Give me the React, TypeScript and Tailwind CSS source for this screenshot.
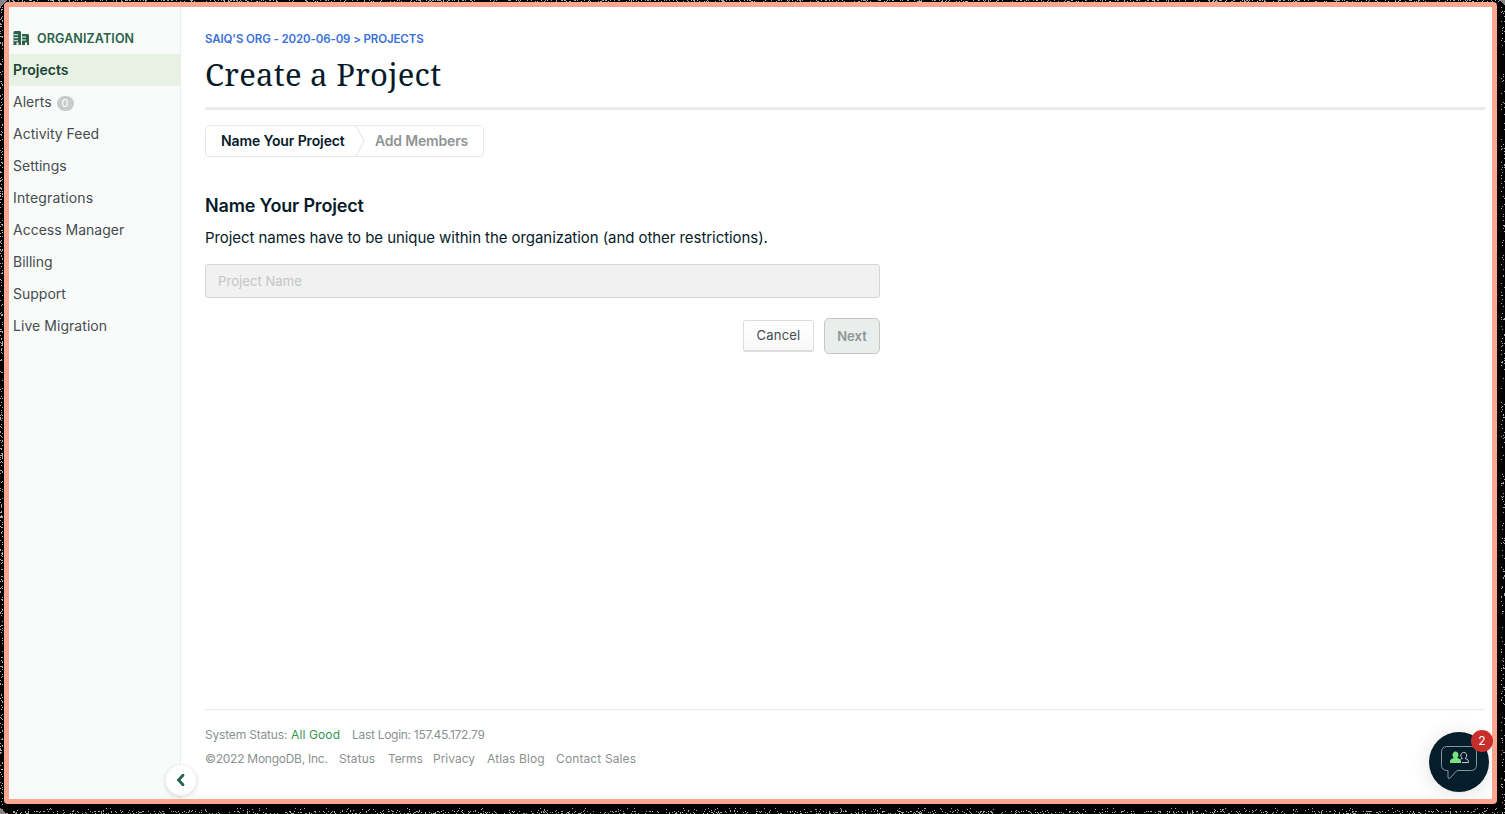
import React from "react";

const nav: [string, string][] = [
  ["Projects", "font-semibold text-[#1c4234]"],
  ["Alerts", ""],
  ["Activity Feed", ""],
  ["Settings", ""],
  ["Integrations", "tracking-[0.150px]"],
  ["Access Manager", ""],
  ["Billing", ""],
  ["Support", ""],
  ["Live Migration", "tracking-[0.050px]"],
];

// Scattered one-pixel specks along the dark rim around the window.
function specks() {
  let seed = 7;
  const rnd = () => {
    seed = (seed * 16807) % 2147483647;
    return seed / 2147483647;
  };
  let d = "";
  const put = (x: number, y: number) => {
    d += `M${Math.floor(x)} ${Math.floor(y)}h1v1h-1z`;
  };
  for (let i = 0; i < 450; i++) put(rnd() * 3, rnd() * 814);
  for (let i = 0; i < 260; i++) put(1501 + rnd() * 4, rnd() * 814);
  for (let i = 0; i < 650; i++) put(rnd() * 1505, rnd() * 1.5);
  for (let i = 0; i < 700; i++) put(rnd() * 1505, 811 + rnd() * 3);
  for (let i = 0; i < 250; i++) put(rnd() * 1505, 808 + rnd() * 4);
  return d;
}

const speckPath = specks();

function OrgIcon() {
  return (
    <svg className="mb-[2px]" width="17" height="16" viewBox="0 0 17 16" fill="#2a6149">
      <path
        fillRule="evenodd"
        d="M1.500 1h5.500l1 1v13H5.500v-2.500h-2V15H.5V2zM0 4.200h5v1H0zM0 7.200h5v1H0zM0 10.200h5v1H0z"
      />
      <path
        fillRule="evenodd"
        d="M9 4h6l1 1v10h-2v-2.500h-2V15H9zM9 6.500h4v1H9zM9 9.500h4v1H9z"
      />
    </svg>
  );
}

function Sidebar() {
  return (
    <aside className="relative w-[172px] shrink-0 border-r border-[#e7eeec] bg-[#f9fbfa] pt-[16px]">
      <div className="flex h-[31px] items-center gap-[7px] pl-[4px] text-[12.500px] font-semibold tracking-[0.120px] text-[#2a6149]">
        <OrgIcon />
        <span className="pt-[1px]">ORGANIZATION</span>
      </div>
      <nav className="text-[14px] text-[#464c4f]">
        {nav.map(([name, style]) => (
          <div
            key={name}
            className={"flex h-8 items-center gap-[5px] pl-[4px] " + style + (name === "Projects" ? " bg-[#e7f1e4]" : "")}
          >
            <span className="pb-[1px]">{name}</span>
            {name === "Alerts" && (
              <span className="mt-[2px] flex h-[15px] w-[17px] items-center justify-center rounded-full bg-[#c8cccb] text-[11px] text-white">0</span>
            )}
          </div>
        ))}
      </nav>
      <button className="absolute right-[-17px] bottom-[3px] flex size-8 items-center justify-center rounded-full border border-[#eef1f0] bg-white shadow-[0_2px_4px_rgba(0,0,0,0.12)]">
        <svg width="10" height="14" viewBox="0 0 10 14" fill="none" stroke="#23644b" strokeWidth="2.800" strokeLinecap="round" strokeLinejoin="miter">
          <path d="M7 2.200 2.500 7l4.500 4.800" />
        </svg>
      </button>
    </aside>
  );
}

function Steps() {
  return (
    <div className="mt-[15px] flex h-8 w-[279px] items-center rounded-[4px] border border-[#e7eaea] text-[14px] font-semibold tracking-[-0.120px]">
      <span className="w-[135px] pb-[1px] pl-[15px] whitespace-nowrap text-[#061b29]">Name Your Project</span>
      <svg width="34" height="30" viewBox="0 0 34 30" fill="none" stroke="#dfe3e2">
        <path d="M15 0 23 15 15 30" />
      </svg>
      <span className="pb-[1px] whitespace-nowrap tracking-[-0.180px] text-[#8f9493]">Add Members</span>
    </div>
  );
}

function Footer() {
  return (
    <footer className="h-[90px] border-t border-[#e7eaea] pt-[13px] text-[12px] leading-6 text-[#8a9190]">
      <div className="flex">
        <span className="w-[86px] tracking-[-0.180px]">System Status:</span>
        <span className="w-[61px] tracking-[0.120px] text-[#349652]">All Good</span>
        <span className="tracking-[-0.290px]">Last Login: 157.45.172.79</span>
      </div>
      <div className="flex gap-3 whitespace-nowrap">
        <span className="w-[122px] tracking-[-0.260px]">©2022 MongoDB, Inc.</span>
        <span className="w-[37px] tracking-[0.080px]">Status</span>
        <span className="w-[33px] tracking-[-0.150px]">Terms</span>
        <span className="w-[42px]">Privacy</span>
        <span className="w-[57px] tracking-[0.100px]">Atlas Blog</span>
        <span className="tracking-[0.120px]">Contact Sales</span>
      </div>
    </footer>
  );
}

function Chat() {
  return (
    <div className="absolute right-[3px] bottom-[7px] size-[60px] rounded-full bg-[#061d2b] shadow-[0_2px_20px_rgba(0,0,0,0.12)]">
      <svg width="60" height="60" viewBox="0 0 60 60" fill="none">
        <path d="M17.500 14.500h25a5 5 0 0 1 5 5v14a5 5 0 0 1-5 5H28l-7 7.500q-2 1.500-2-1v-6.500h-1.500a5 5 0 0 1-5-5v-14a5 5 0 0 1 5-5z" stroke="#98a3a9" strokeWidth="0.900" />
        <path d="M21 31v-1.500q0-3 4-3.500a3 3.500 0 1 1 3 0q4 .5 4 3.500V31z" fill="#79e47f" />
        <path d="M33 30.500H39.500V29.500q0-2.500-3.500-3a3 3.200 0 1 0-2.500 0q-1.500.3-2 1" stroke="#c5cdd0" />
      </svg>
      <span className="absolute -top-[2px] -right-[4px] flex size-[22px] items-center justify-center rounded-full bg-[#c82f2c] text-[12px] text-white">2</span>
    </div>
  );
}

export default function App() {
  return (
    <div className="relative h-[814px] w-[1505px] bg-black pt-[2px] pl-[4px] font-['Inter',sans-serif]">
      <svg className="absolute top-0 left-0" width="1505" height="814" fill="#a9a9a9" shapeRendering="crispEdges">
        <path d={speckPath} />
        <path d="M0 0h8L0 7zM1505 0v6l-6-6zM0 814v-6l6 6z" fill="#858585" />
      </svg>
      <div className="relative flex h-[802px] w-[1493px] rounded-[4px] border-[5px] border-[#ffa78e] bg-white">
        <Sidebar />
        <main className="flex min-w-0 flex-1 flex-col pr-[7px] pl-[24px]">
          <div className="mt-[24px] h-[16px] text-[11.500px] leading-4 font-semibold tracking-[-0.120px] text-[#3970d8]">SAIQ'S ORG - 2020-06-09 &gt; PROJECTS</div>
          <h1 className="mt-[6px] h-[47px] font-['Noto_Serif','DejaVu_Serif',serif] text-[31px] leading-[43px] font-normal tracking-[0.270px] text-[#061b29]">Create a Project</h1>
          <div className="mt-[7px] h-[3px] bg-[#e8eceb]" />
          <Steps />
          <h2 className="mt-[36px] text-[18px] leading-[25px] font-semibold tracking-[-0.170px] text-[#061b29]">Name Your Project</h2>
          <p className="mt-[8px] text-[15px] leading-6 tracking-[-0.060px] text-[#061b29]">Project names have to be unique within the organization (and other restrictions).</p>
          <input placeholder="Project Name" className="mt-[14px] h-[34px] w-[675px] rounded-[3px] border border-[#d5d7d7] bg-[#f1f1f1] px-3 text-[13px] tracking-[0.080px] placeholder:text-[#c3c5c5]" />
          <div className="mt-[20px] flex w-[675px] items-start justify-end gap-[10px] text-[13px]">
            <button className="mt-[2px] h-[32px] w-[71px] rounded-[3px] border border-b-2 border-[#dcdede] bg-gradient-to-b from-white to-[#f8f8f8] pt-[1px] tracking-[0.200px] text-[#464c4f]">Cancel</button>
            <button className="h-[36px] w-[56px] rounded-[5px] border border-[#c2c8c6] bg-[#e9edec] pt-[1px] font-semibold text-[#8f9795]">Next</button>
          </div>
          <div className="flex-1" />
          <Footer />
        </main>
        <Chat />
      </div>
    </div>
  );
}
